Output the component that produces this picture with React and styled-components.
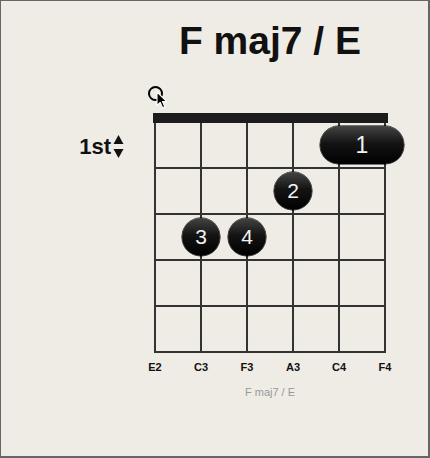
import styled, { createGlobalStyle } from "styled-components";

const GlobalStyle = createGlobalStyle`
html, body {
margin: 0;
padding: 0;
background: #efebe5;
}
* {
box-sizing: border-box;
}
`

const STRING_GAP = 46
const strings = ["E2", "C3", "F3", "A3", "C4", "F4"]
const open = [0]
const dots = [
    { string: 3, fret: 2, finger: 2 },
    { string: 1, fret: 3, finger: 3 },
    { string: 2, fret: 3, finger: 4 },
]
const barre = { from: 4, to: 5, fret: 1, finger: 1 }

const App = () => {
    return (
        <>
            <GlobalStyle />
            <Frame>
                <Gutter>
                    <FretLabel>
                        <span>1st</span>
                        <Stepper width="11" height="24" viewBox="0 0 11 24">
                            <path d="M5.5 0 L10.5 9 L0.5 9 Z" fill="#111" />
                            <path d="M0.5 14 L10.5 14 L5.5 23 Z" fill="#111" />
                        </Stepper>
                    </FretLabel>
                </Gutter>
                <Main>
                    <Title>F maj7 / E</Title>
                    <MarkerRow>
                        {open.map((s) => (
                            <OpenMarker key={s} style={{ left: 1 + s * STRING_GAP - 7 }} />
                        ))}
                        <Cursor width="12" height="18" viewBox="0 0 12 18">
                            <path d="M1 1 L1 14.5 L4.2 11.4 L6.6 16.8 L8.8 15.8 L6.5 10.6 L10.8 10.6 Z" fill="#000" stroke="#fff" strokeWidth="1.1" strokeLinejoin="round" />
                        </Cursor>
                    </MarkerRow>
                    <Nut />
                    <Board>
                        <Grid>
                            {Array.from({ length: 25 }).map((_, i) => <Cell key={i} />)}
                        </Grid>
                        <Barre
                            style={{
                                left: 1 + barre.from * STRING_GAP - 19,
                                width: (barre.to - barre.from) * STRING_GAP + 38,
                                top: 22 + (barre.fret - 1) * STRING_GAP - 19,
                            }}
                        >
                            {barre.finger}
                        </Barre>
                        {dots.map((d) => (
                            <Dot
                                key={d.finger}
                                style={{
                                    left: 1 + d.string * STRING_GAP - 19,
                                    top: 22 + (d.fret - 1) * STRING_GAP - 19,
                                }}
                            >
                                {d.finger}
                            </Dot>
                        ))}
                    </Board>
                    <StringLabels>
                        {strings.map((s) => <StringLabel key={s}>{s}</StringLabel>)}
                    </StringLabels>
                    <Caption>F maj7 / E</Caption>
                </Main>
            </Frame>
        </>
    )
}

const Frame = styled.div`
width: 430px;
height: 458px;
border: 1px solid #666;
border-right-width: 2px;
border-bottom-width: 2px;
background: #efebe5;
display: flex;
font-family: "Liberation Sans", Arial, sans-serif;
color: #111;
`

const Gutter = styled.div`
width: 153px;
padding-top: 133px;
padding-right: 30px;
display: flex;
justify-content: flex-end;
align-items: flex-start;
`

const FretLabel = styled.div`
display: flex;
align-items: center;
gap: 2px;
font-size: 22px;
font-weight: bold;
line-height: 26px;
`

const Stepper = styled.svg`
display: block;
`

const Main = styled.div`
width: 232px;
display: flex;
flex-direction: column;
`

const Title = styled.h1`
margin: 21px -40px 0;
font-size: 39px;
line-height: 38px;
font-weight: bold;
text-align: center;
white-space: nowrap;
`

const MarkerRow = styled.div`
position: relative;
margin-top: 24px;
height: 29px;
`

const OpenMarker = styled.div`
position: absolute;
top: 2px;
width: 15px;
height: 15px;
border: 2.5px solid #000;
border-radius: 50%;
`

const Cursor = styled.svg`
position: absolute;
left: 2px;
top: 7px;
`

const Nut = styled.div`
width: 235px;
height: 10px;
margin-left: -1px;
background: #1c1c1c;
`

const Board = styled.div`
position: relative;
`

const Grid = styled.div`
display: grid;
grid-template-columns: repeat(5, 44px);
grid-template-rows: repeat(5, 44px);
gap: 2px;
padding: 0 2px 2px 2px;
background: #333;
`

const Cell = styled.div`
background: #efebe5;
`

const Finger = styled.div`
position: absolute;
height: 38px;
display: flex;
align-items: center;
justify-content: center;
color: #f2f2f2;
background: linear-gradient(to bottom, #444 0%, #141414 45%, #000 100%);
border-radius: 19px;
box-shadow: 0 0 0 0.5px #000;
`

const Dot = styled(Finger)`
width: 38px;
font-size: 21px;
`

const Barre = styled(Finger)`
font-size: 23px;
`

const StringLabels = styled.div`
display: grid;
grid-template-columns: repeat(6, 46px);
margin: 8px 0 0 -22px;
`

const StringLabel = styled.div`
text-align: center;
font-size: 11px;
font-weight: bold;
line-height: 13px;
`

const Caption = styled.div`
margin-top: 12px;
text-align: center;
font-size: 11px;
line-height: 13px;
color: #999;
`

export default App;
